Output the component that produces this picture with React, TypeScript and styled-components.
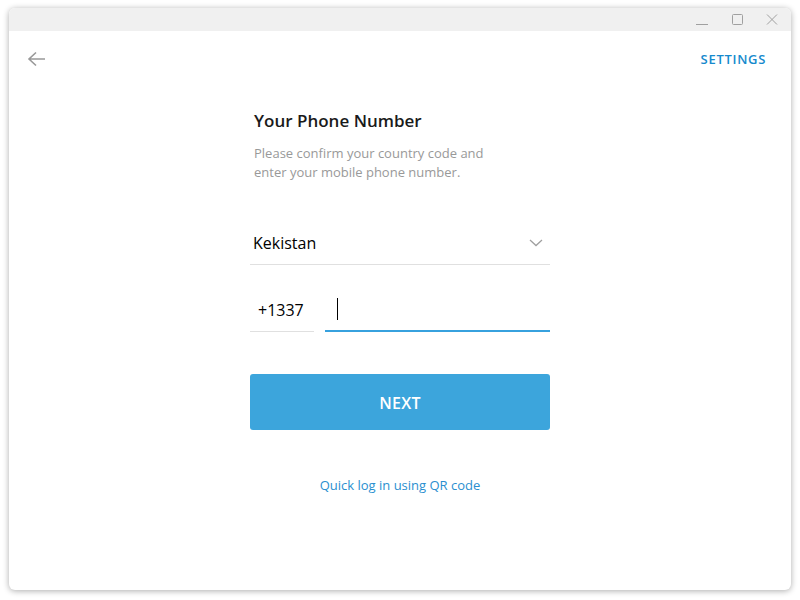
import React, { useState } from 'react';
import styled, { createGlobalStyle } from 'styled-components';

const GlobalStyle = createGlobalStyle`
  html, body {
    margin: 0;
    padding: 0;
    background: #ffffff;
    font-family: "Open Sans", "Noto Sans", sans-serif;
  }
`

const Page = styled.div`
  width: 800px;
  height: 600px;
  padding: 8px 9px 10px 9px;
  box-sizing: border-box;
`

const Window = styled.div`
  width: 782px;
  height: 582px;
  border-radius: 6px;
  background: #ffffff;
  box-shadow: 0 1px 6px rgba(0, 0, 0, 0.33);
  display: flex;
  flex-direction: column;
  overflow: hidden;
`

const TitleBar = styled.div`
  height: 23px;
  background: #f0f0f0;
  display: flex;
  justify-content: flex-end;
  align-items: center;
  padding-right: 2px;
`

const TitleButton = styled.div`
  width: 35px;
  height: 23px;
  display: flex;
  align-items: center;
  justify-content: center;
`

const Header = styled.div`
  height: 56px;
  display: flex;
  align-items: center;
  justify-content: space-between;
  padding: 0 25px 0 18px;
`

const BackButton = styled.div`
  width: 20px;
  height: 20px;
  display: flex;
  align-items: center;
  justify-content: center;
`

const HeaderLink = styled.span`
  font-size: 13px;
  font-weight: 600;
  color: #168acd;
  letter-spacing: 0.7px;
`

const Form = styled.div`
  width: 300px;
  margin: 0 auto;
  display: flex;
  flex-direction: column;
`

const Title = styled.div`
  margin-top: 23px;
  padding-left: 4px;
  font-size: 17px;
  line-height: 22px;
  font-weight: 600;
  color: #1a1a1a;
`

const Description = styled.div`
  margin-top: 12px;
  padding-left: 4px;
  font-size: 13px;
  line-height: 19px;
  color: #999999;
`

const CountryField = styled.div`
  margin-top: 39px;
  height: 43px;
  border-bottom: 1px solid #e0e0e0;
  display: flex;
  align-items: center;
  justify-content: space-between;
  padding: 0 7px 0 3px;
`

const FieldText = styled.span`
  font-size: 16px;
  color: #000000;
`

const PhoneRow = styled.div`
  margin-top: 23px;
  display: flex;
  gap: 11px;
`

const PhoneField = styled.div<{ $width: number; $active?: boolean }>`
  width: ${p => p.$width}px;
  height: 44px;
  box-sizing: border-box;
  border-bottom: ${p => (p.$active ? '2px solid #37a1de' : '1px solid #e0e0e0')};
  display: flex;
  align-items: center;
  padding: ${p => (p.$active ? '0 0 1px 12px' : '0 0 0 8px')};
`

const Caret = styled.div`
  width: 1px;
  height: 22px;
  background: #000000;
`

const NextButton = styled.button`
  margin-top: 42px;
  height: 56px;
  padding: 2px 0 0 0;
  border: none;
  border-radius: 3px;
  background: #3ca5dc;
  color: #ffffff;
  font-family: "Open Sans", "Noto Sans", sans-serif;
  font-size: 16px;
  font-weight: 600;
  letter-spacing: 0.2px;
  cursor: pointer;
`

const QrLink = styled.div`
  margin-top: 45px;
  text-align: center;
  font-size: 13px;
  line-height: 20px;
  color: #2a8fd0;
`

function App() {
  const [country] = useState('Kekistan');
  const [code] = useState('+1337');

  return (
    <>
      <GlobalStyle />
      <Page>
        <Window>
          <TitleBar>
            <TitleButton>
              <svg width="14" height="14" viewBox="0 0 14 14">
                <path d="M1 11.5h12" stroke="#a0a0a0" strokeWidth="1" />
              </svg>
            </TitleButton>
            <TitleButton>
              <svg width="14" height="14" viewBox="0 0 14 14">
                <rect x="2.5" y="1.5" width="10" height="10" fill="none" stroke="#a0a0a0" strokeWidth="1" rx="1" />
              </svg>
            </TitleButton>
            <TitleButton>
              <svg width="14" height="14" viewBox="0 0 14 14">
                <path d="M2 1.5l10 10M12 1.5l-10 10" stroke="#a0a0a0" strokeWidth="1" />
              </svg>
            </TitleButton>
          </TitleBar>
          <Header>
            <BackButton>
              <svg width="20" height="16" viewBox="0 0 20 16">
                <path d="M2 8h16M9 1.5L2 8l7 6.5" fill="none" stroke="#999999" strokeWidth="1.6" />
              </svg>
            </BackButton>
            <HeaderLink>SETTINGS</HeaderLink>
          </Header>
          <Form>
            <Title>Your Phone Number</Title>
            <Description>
              Please confirm your country code and
              <br />
              enter your mobile phone number.
            </Description>
            <CountryField>
              <FieldText>{country}</FieldText>
              <svg width="14" height="8" viewBox="0 0 14 8">
                <path d="M1 1l6 5.5L13 1" fill="none" stroke="#a0a0a0" strokeWidth="1.3" />
              </svg>
            </CountryField>
            <PhoneRow>
              <PhoneField $width={64}>
                <FieldText>{code}</FieldText>
              </PhoneField>
              <PhoneField $width={225} $active>
                <Caret />
              </PhoneField>
            </PhoneRow>
            <NextButton>NEXT</NextButton>
            <QrLink>Quick log in using QR code</QrLink>
          </Form>
        </Window>
      </Page>
    </>
  );
}

export default App;
